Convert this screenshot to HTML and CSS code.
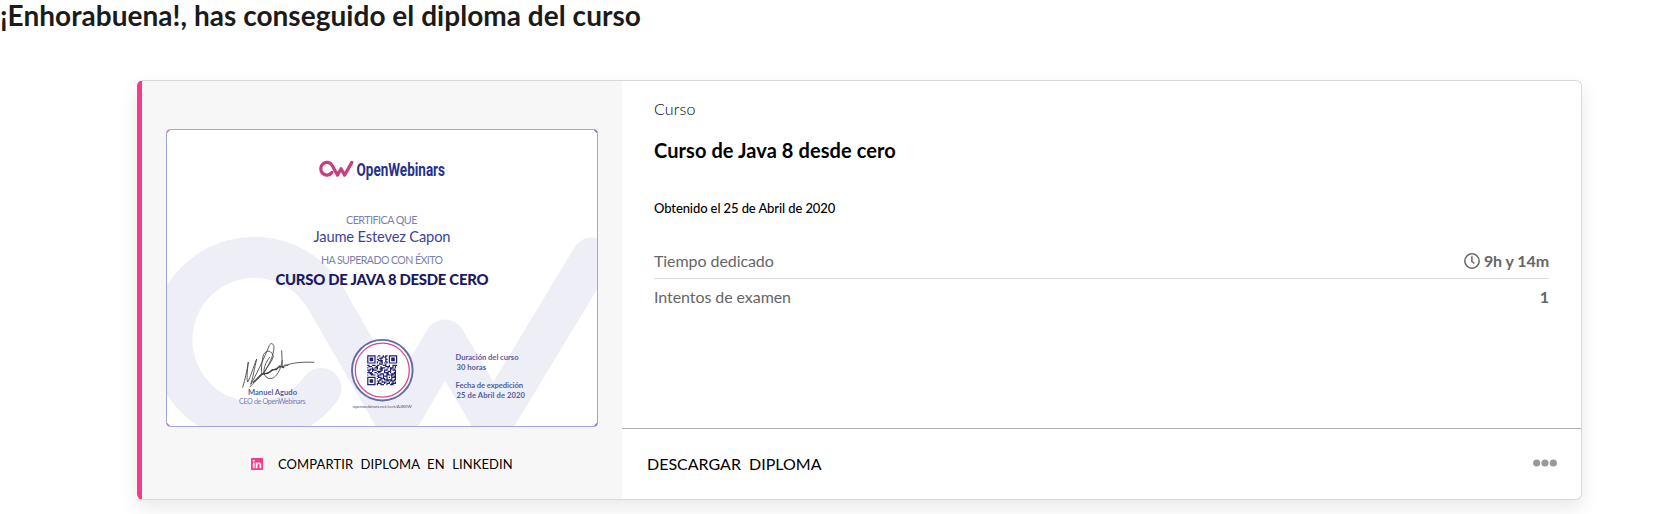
FILE: index.html
```html
<!DOCTYPE html>
<html lang="es">
<head>
<meta charset="utf-8">
<title>Diploma del curso</title>
<link rel="stylesheet" href="styles.css">
</head>
<body>
<h1 class="page-title">¡Enhorabuena!, has conseguido el diploma del curso</h1>
<article class="card">
  <section class="preview">
    <svg class="diploma" viewBox="0 0 432 298" width="432" height="298" role="img" aria-label="Diploma">
      <defs><clipPath id="sheet"><rect x="0.5" y="0.5" width="431" height="297" rx="4"/></clipPath></defs>
      <g clip-path="url(#sheet)">
        <rect width="432" height="298" fill="#fff"/>
        <path class="mark" d="M155 259.500A82.500 82.500 0 1 1 159.500 169L231 293L279 211L327 293L426 129"/>
        <path d="M0 0H5L0 5Z" fill="#d8478c"/><path d="M432 0V5L427 0Z" fill="#2b2b80"/>
        <path d="M0 298V293L5 298Z" fill="#d8478c"/><path d="M432 298H427L432 293Z" fill="#2b2b80"/>
      </g>
      <rect x="0.500" y="0.500" width="431" height="297" rx="4" fill="none" stroke="#a2a5dc"/>
      <path class="logo" transform="translate(154.400 23.500) scale(.074 .077)" d="M155 259.5A83 83 0 1 1 159.500 169L231 293L279 211L327 293L425 129"/>
      <text class="brand" x="190.500" y="47" textLength="88.500" lengthAdjust="spacingAndGlyphs">OpenWebinars</text>
      <g class="soft">
        <text x="180" y="94.500" font-size="10.800" textLength="71.500">CERTIFICA QUE</text>
        <text x="155" y="135.400" font-size="10.600" textLength="122">HA SUPERADO CON ÉXITO</text>
      </g>
      <text class="person" x="147.500" y="112.600" textLength="137">Jaume Estevez Capon</text>
      <text class="course" x="109.500" y="155.700" textLength="213">CURSO DE JAVA 8 DESDE CERO</text>
      <g class="signature" transform="translate(64 201) scale(.3333)">
        <path d="M38 172C45 150 51 122 55 96C51 126 50 150 53 156C61 142 70 112 80 87C74 112 68 148 62 163C75 142 102 86 118 46C124 35 135 42 131 61C127 89 108 119 97 132C92 129 95 92 101 73C112 57 126 62 130 80C125 96 108 116 101 130"/>
        <path d="M60 170L76 154L99 132L121 126L136 116L151 111L174 106M119 82C100 104 94 138 115 145C136 151 152 122 157 91M155 62L157 111C162 109 164 102 170 105C190 99 211 95 252 97"/>
        <path d="M70 157L95 132L114 130L127 119L139 119L149 108L161 113" stroke-width="4"/>
      </g>
      <g class="strong">
        <text x="82" y="266.200" textLength="49">Manuel Agudo</text>
        <text x="289.500" y="231" textLength="63">Duración del curso</text>
        <text x="290.500" y="241.400" textLength="29.500">30 horas</text>
        <text x="289.500" y="259" textLength="67.500">Fecha de expedición</text>
        <text x="290.500" y="269.300" textLength="68.500">25 de Abril de 2020</text>
      </g>
      <text class="role" x="73" y="274.700" textLength="66.500">CEO de OpenWebinars</text>
      <circle cx="216.300" cy="241.200" r="30.300" fill="#fff" stroke="#626ba8" stroke-width="1.900"/>
      <circle cx="216.300" cy="241.200" r="27" fill="none" stroke="#d24c8b" stroke-width="1.300"/>
      <g transform="translate(201.200 226.200) scale(1.200)" stroke="#20206e" fill="none">
        <path d="M.5 .5h6v6h-6zM18.500 .5h6v6h-6zM.5 18.500h6v6h-6z"/>
        <path stroke-width="3" d="M2 3.500h3M20 3.500h3M2 21.500h3"/>
        <path d="M9 .5h2m2 0h1m1 0h2M8 1.500h1m3 0h4M10 2.500h3m2 0h1M8 3.500h2m1 0h1m3 0h2M9 4.500h4m2 0h1M8 5.500h1m2 0h2m2 0h2M8 6.500h1m1 0h1m1 0h1m1 0h1m1 0h1M10 7.500h3m2 0h1M0 8.500h2m2 0h3m1 0h2m3 0h3m2 0h1m2 0h4M1 9.500h3m3 0h2m2 0h1m3 0h4m2 0h1m1 0h1M0 10.500h1m3 0h1m1 0h3m2 0h4m2 0h1m1 0h3m1 0h1M2 11.500h4m2 0h1m1 0h3m3 0h1m2 0h2m1 0h1M0 12.500h3m1 0h4m3 0h2m1 0h3m2 0h1m1 0h3M1 13.500h1m2 0h1m3 0h4m2 0h1m2 0h3m3 0h1M0 14.500h4m2 0h2m1 0h2m3 0h4m1 0h1m2 0h2M2 15.500h3m3 0h1m2 0h3m2 0h2m2 0h4M0 16.500h1m2 0h4m2 0h3m1 0h1m2 0h6m1 0h1M8 17.500h2m3 0h4m3 0h1m1 0h2M9 18.500h3m1 0h1m2 0h1m1 0h1m1 0h4M8 19.500h1m2 0h4m1 0h1m3 0h1m2 0h1M10 20.500h2m2 0h7m1 0h2M8 21.500h3m1 0h1m3 0h2m1 0h4M9 22.500h1m2 0h4m2 0h1m2 0h1m1 0h1M8 23.500h4m2 0h1m1 0h3m1 0h4M8 24.500h1m2 0h3m2 0h1m2 0h3"/>
      </g>
      <text class="url" x="186.700" y="279" textLength="59">openwebinars.net/cert/AJ8XW</text>
    </svg>
    <a class="share">
      <svg class="linkedin" viewBox="0 0 448 448" width="12" height="12"><path fill="#f83a8a" fill-rule="evenodd" d="M416 0H32C14 0 0 14.500 0 32.300v383.400C0 433.500 14 448 32 448h384c17.600 0 32-14.500 32-32.300V32.300C448 14.500 433.600 0 416 0zM135 384H69V170h67v214zM102 141a38.500 38.500 0 1 1 0-77 38.500 38.500 0 0 1 0 77zm282 243h-66V280c0-25-1-57-35-57s-40 27-40 55v106h-66V170h64v29h1c9-17 31-35 63-35 67 0 80 44 80 102v118z"/></svg>
      <span class="share-label">COMPARTIR DIPLOMA EN LINKEDIN</span>
    </a>
  </section>
  <section class="details">
    <div class="info">
      <p class="kind">Curso</p>
      <h2 class="name">Curso de Java 8 desde cero</h2>
      <p class="date">Obtenido el 25 de Abril de 2020</p>
      <div class="row row-first">
        <span>Tiempo dedicado</span>
        <span class="value"><svg class="clock" viewBox="0 0 16 16" width="16" height="16"><circle cx="8" cy="8" r="7.200"/><path d="M7.900 3.300V8.500L10.400 10.500"/></svg>9h y 14m</span>
      </div>
      <div class="row"><span>Intentos de examen</span><span class="value">1</span></div>
    </div>
    <footer class="actions">
      <a class="download">DESCARGAR DIPLOMA</a>
      <svg class="more" viewBox="0 0 24 8" width="24" height="8"><circle cx="3.700" cy="4" r="3.600"/><circle cx="12" cy="4" r="3.600"/><circle cx="20.300" cy="4" r="3.600"/></svg>
    </footer>
  </section>
</article>
</body>
</html>
```
FILE: styles.css
```css
* { box-sizing: border-box; }
body { margin: 0; height: 514px; overflow: hidden; background: #fff; font-family: Lato, sans-serif; color: #000; }
h1, h2, p { margin: 0; }
.page-title { height: 30px; font-size: 28px; line-height: 30px; font-weight: 700; letter-spacing: .035px; color: #1b1b1b; white-space: nowrap; }
.card { display: flex; width: 1445px; height: 420px; margin: 50px 0 0 137px; background: #fff; border: 1px solid #d8d8d8; border-left: 5px solid #f83a8a; border-radius: 6px; box-shadow: 0 8px 20px rgba(0, 0, 0, .09); overflow: hidden; }
.preview { width: 480px; padding: 48px 24px 0; background: #f7f7f7; }
.diploma { display: block; }
.mark { fill: none; stroke: #eeeef7; stroke-width: 41; stroke-linecap: round; stroke-linejoin: round; }
.logo { fill: none; stroke: #c73f7e; stroke-width: 44; stroke-linecap: round; stroke-linejoin: round; }
.brand { font: 700 19px Roboto, sans-serif; fill: #26308a; }
.soft { fill: #7b80b3; }
.person { font-size: 14.700px; fill: #414397; }
.course { font-size: 14.900px; font-weight: 900; fill: #1a1a63; }
.signature { fill: none; stroke: #444; stroke-width: 2.600; stroke-linecap: round; stroke-linejoin: round; }
.strong { font-size: 7.600px; font-weight: 700; fill: #555b9c; }
.role { font-size: 7.200px; fill: #777db8; }
.url { font-size: 4.600px; fill: #555579; }
.share { display: flex; align-items: center; height: 72px; padding: 2px 0 0 85px; font-size: 13px; }
.share-label { margin-left: 15px; letter-spacing: .1px; word-spacing: 4px; white-space: nowrap; }
.details { display: flex; flex: 1; flex-direction: column; }
.info { flex: 1; padding: 16px 32px 0; }
.kind { font-size: 16px; line-height: 24px; font-weight: 300; letter-spacing: .2px; }
.name { margin-top: 17px; font-size: 20px; line-height: 24px; font-weight: 700; letter-spacing: .08px; }
.date { margin-top: 36px; font-size: 13px; line-height: 20px; font-weight: 500; letter-spacing: -.1px; }
.row { display: flex; justify-content: space-between; padding-top: 6px; font-size: 16px; line-height: 24px; letter-spacing: -.07px; color: #666; }
.row-first { margin-top: 31px; padding: 0 0 5px; border-bottom: 1px solid #dcdcdc; }
.value { display: flex; align-items: center; font-weight: 700; }
.clock { margin-right: 4px; fill: none; stroke: #666; stroke-width: 1.500; }
.actions { display: flex; align-items: center; justify-content: space-between; height: 71px; padding: 0 24px 2px 25px; border-top: 1px solid #b0b0b0; }
.download { font-size: 16px; word-spacing: 4px; }
.more { fill: #999; }
```
